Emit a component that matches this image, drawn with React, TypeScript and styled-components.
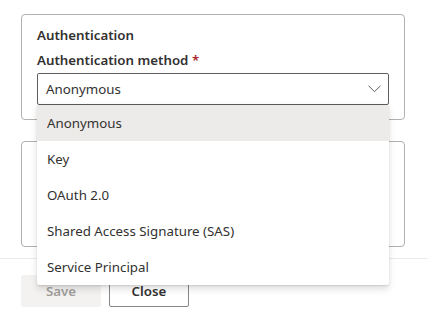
import React from 'react';
import styled, { createGlobalStyle } from 'styled-components';

const GlobalStyle = createGlobalStyle`
  html, body {
    margin: 0;
    padding: 0;
    background: #ffffff;
  }
  body {
    font-family: 'Noto Sans', 'Open Sans', sans-serif;
    color: #323130;
    overflow: hidden;
  }
`;

const Page = styled.div`
  width: 428px;
  height: 317px;
  padding-top: 14px;
  box-sizing: border-box;
`;

const Sections = styled.div`
  display: flex;
  flex-direction: column;
  gap: 21px;
  padding: 0 23px 0 21px;
`;

const Card = styled.section<{ $height: number }>`
  position: relative;
  height: ${({ $height }) => $height}px;
  box-sizing: border-box;
  border: 1px solid #b3b0ad;
  border-radius: 4px;
  padding: 10px 15px 0;
`;

const Heading = styled.div`
  font-size: 13.3px;
  font-weight: 600;
  line-height: 20px;
`;

const Label = styled.label`
  display: block;
  margin-top: 5px;
  font-size: 13.3px;
  font-weight: 600;
  line-height: 20px;
`;

const Required = styled.span`
  color: #a4262c;
`;

const SelectWrap = styled.div`
  position: relative;
  margin-top: 3px;
`;

const SelectBox = styled.div`
  display: flex;
  align-items: center;
  justify-content: space-between;
  height: 32px;
  box-sizing: border-box;
  border: 1px solid #605e5c;
  border-radius: 2px;
  padding: 0 7px 0 8px;
  font-size: 13.3px;
`;

const Menu = styled.ul`
  position: absolute;
  z-index: 10;
  top: 32px;
  left: 0;
  right: 0;
  margin: 0;
  padding: 0;
  list-style: none;
  background: #ffffff;
  box-shadow: 0 3.2px 7.2px rgba(0, 0, 0, 0.13), 0 0.6px 1.8px rgba(0, 0, 0, 0.11);
  border-radius: 0 0 2px 2px;
`;

const Option = styled.li<{ $selected?: boolean }>`
  display: flex;
  align-items: center;
  height: 36px;
  padding: 0 10px;
  font-size: 13.3px;
  color: #323130;
  background: ${({ $selected }) => ($selected ? '#edebe9' : 'transparent')};
`;

const Footer = styled.div`
  margin-top: 11px;
  border-top: 1px solid #edebe9;
  padding: 16px 21px;
  display: flex;
  gap: 8px;
`;

const Button = styled.button<{ $disabled?: boolean }>`
  width: 80px;
  height: 32px;
  box-sizing: border-box;
  border-radius: 2px;
  font-family: inherit;
  font-size: 13.3px;
  font-weight: 600;
  border: 1px solid ${({ $disabled }) => ($disabled ? '#f3f2f1' : '#8a8886')};
  background: ${({ $disabled }) => ($disabled ? '#f3f2f1' : '#ffffff')};
  color: ${({ $disabled }) => ($disabled ? '#a19f9d' : '#323130')};
`;

const Chevron = () => (
  <svg width="13" height="8" viewBox="0 0 13 8" fill="none">
    <path d="M0.5 0.8 L6.5 6.6 L12.5 0.8" stroke="#605e5c" strokeWidth="1" />
  </svg>
);

const methods = ['Anonymous', 'Key', 'OAuth 2.0', 'Shared Access Signature (SAS)', 'Service Principal'];

const App = () => {
  const selected = 'Anonymous';
  return (
    <Page>
      <GlobalStyle />
      <Sections>
        <Card $height={106}>
          <Heading>Authentication</Heading>
          <Label>
            Authentication method <Required>*</Required>
          </Label>
          <SelectWrap>
            <SelectBox>
              <span>{selected}</span>
              <Chevron />
            </SelectBox>
            <Menu>
              {methods.map((m) => (
                <Option key={m} $selected={m === selected}>
                  {m}
                </Option>
              ))}
            </Menu>
          </SelectWrap>
        </Card>
        <Card $height={106} />
      </Sections>
      <Footer>
        <Button $disabled>Save</Button>
        <Button>Close</Button>
      </Footer>
    </Page>
  );
};

export default App;
